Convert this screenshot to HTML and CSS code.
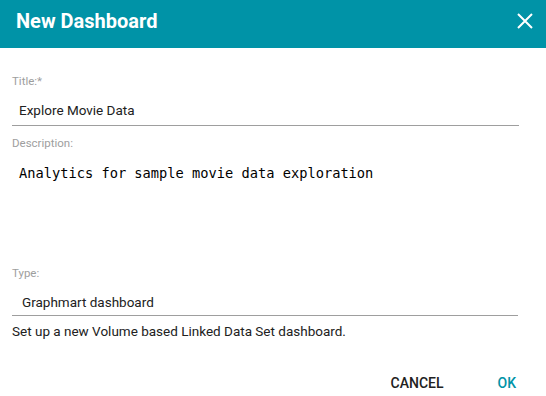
FILE: index.html
```html
<!DOCTYPE html>
<html>
<head>
<meta charset="utf-8">
<link rel="stylesheet" href="styles.css">
</head>
<body>
<div class="dialog">
  <header class="dialog-header">
    <h1 class="dialog-title">New Dashboard</h1>
    <button class="close-btn" aria-label="Close">
      <svg width="16" height="16" viewBox="0 0 16 16"><path d="M1 1 L15 15 M15 1 L1 15" stroke="#ffffff" stroke-width="2" fill="none"/></svg>
    </button>
  </header>
  <div class="dialog-body">
    <div class="field field-title">
      <label class="field-label">Title:*</label>
      <div class="input">Explore Movie Data</div>
    </div>
    <div class="field field-desc">
      <label class="field-label">Description:</label>
      <div class="textarea">Analytics for sample movie data exploration</div>
    </div>
    <div class="field field-type">
      <label class="field-label">Type:</label>
      <div class="select">Graphmart dashboard</div>
    </div>
    <p class="hint">Set up a new Volume based Linked Data Set dashboard.</p>
  </div>
  <footer class="dialog-actions">
    <button class="btn btn-cancel">CANCEL</button>
    <button class="btn btn-ok">OK</button>
  </footer>
</div>
</body>
</html>
```

FILE: styles.css
```css
* { box-sizing: border-box; }
html, body { margin: 0; padding: 0; background: #ffffff; }
body { font-family: Roboto, "Liberation Sans", sans-serif; color: #212121; width: 546px; height: 396px; overflow: hidden; }

.dialog { display: flex; flex-direction: column; width: 546px; height: 396px; }

.dialog-header {
  height: 48px;
  background: #0093a7;
  display: flex;
  align-items: center;
  justify-content: space-between;
  padding: 0 13px 0 16px;
}
.dialog-title {
  margin: 0;
  font-size: 20px;
  font-weight: 700;
  color: #ffffff;
  line-height: 24px;
  margin-top: -6px;
}
.close-btn {
  border: 0;
  background: transparent;
  padding: 0;
  width: 16px;
  height: 16px;
  display: flex;
  margin-top: -6px;
}

.dialog-body { padding: 25px 27px 0 12px; display: flex; flex-direction: column; }

.field-label {
  display: block;
  font-size: 11.5px;
  line-height: 16px;
  color: #9e9e9e;
}
.input {
  margin-top: 5px;
  padding: 6px 0 5px 7px;
  font-size: 13.5px;
  line-height: 20px;
  border-bottom: 1px solid #9e9e9e;
  color: #212121;
}
.field-desc { margin-top: 9px; }
.textarea {
  margin-top: 13px;
  padding-left: 7px;
  font-family: "DejaVu Sans Mono", "Liberation Mono", monospace;
  font-size: 13.7px;
  line-height: 18px;
  color: #000000;
  height: 101px;
}
.select {
  margin-top: 5px;
  padding: 6px 0 3px 10px;
  font-size: 13.5px;
  line-height: 20px;
  border-bottom: 1px solid #9e9e9e;
  color: #212121;
  margin-right: 1px;
}
.hint {
  margin: 7px 0 0 0;
  font-size: 13.5px;
  line-height: 16px;
  color: #212121;
}

.dialog-actions {
  margin-top: auto;
  display: flex;
  justify-content: flex-end;
  gap: 54px;
  padding: 0 30px 1px 0;
}
.btn {
  border: 0;
  background: transparent;
  padding: 0;
  font-family: Roboto, "Liberation Sans", sans-serif;
  font-size: 14px;
  font-weight: 500;
  line-height: 20px;
  height: 24px;
}
.btn-cancel { color: #212121; }
.btn-ok { color: #0093a7; }
```
